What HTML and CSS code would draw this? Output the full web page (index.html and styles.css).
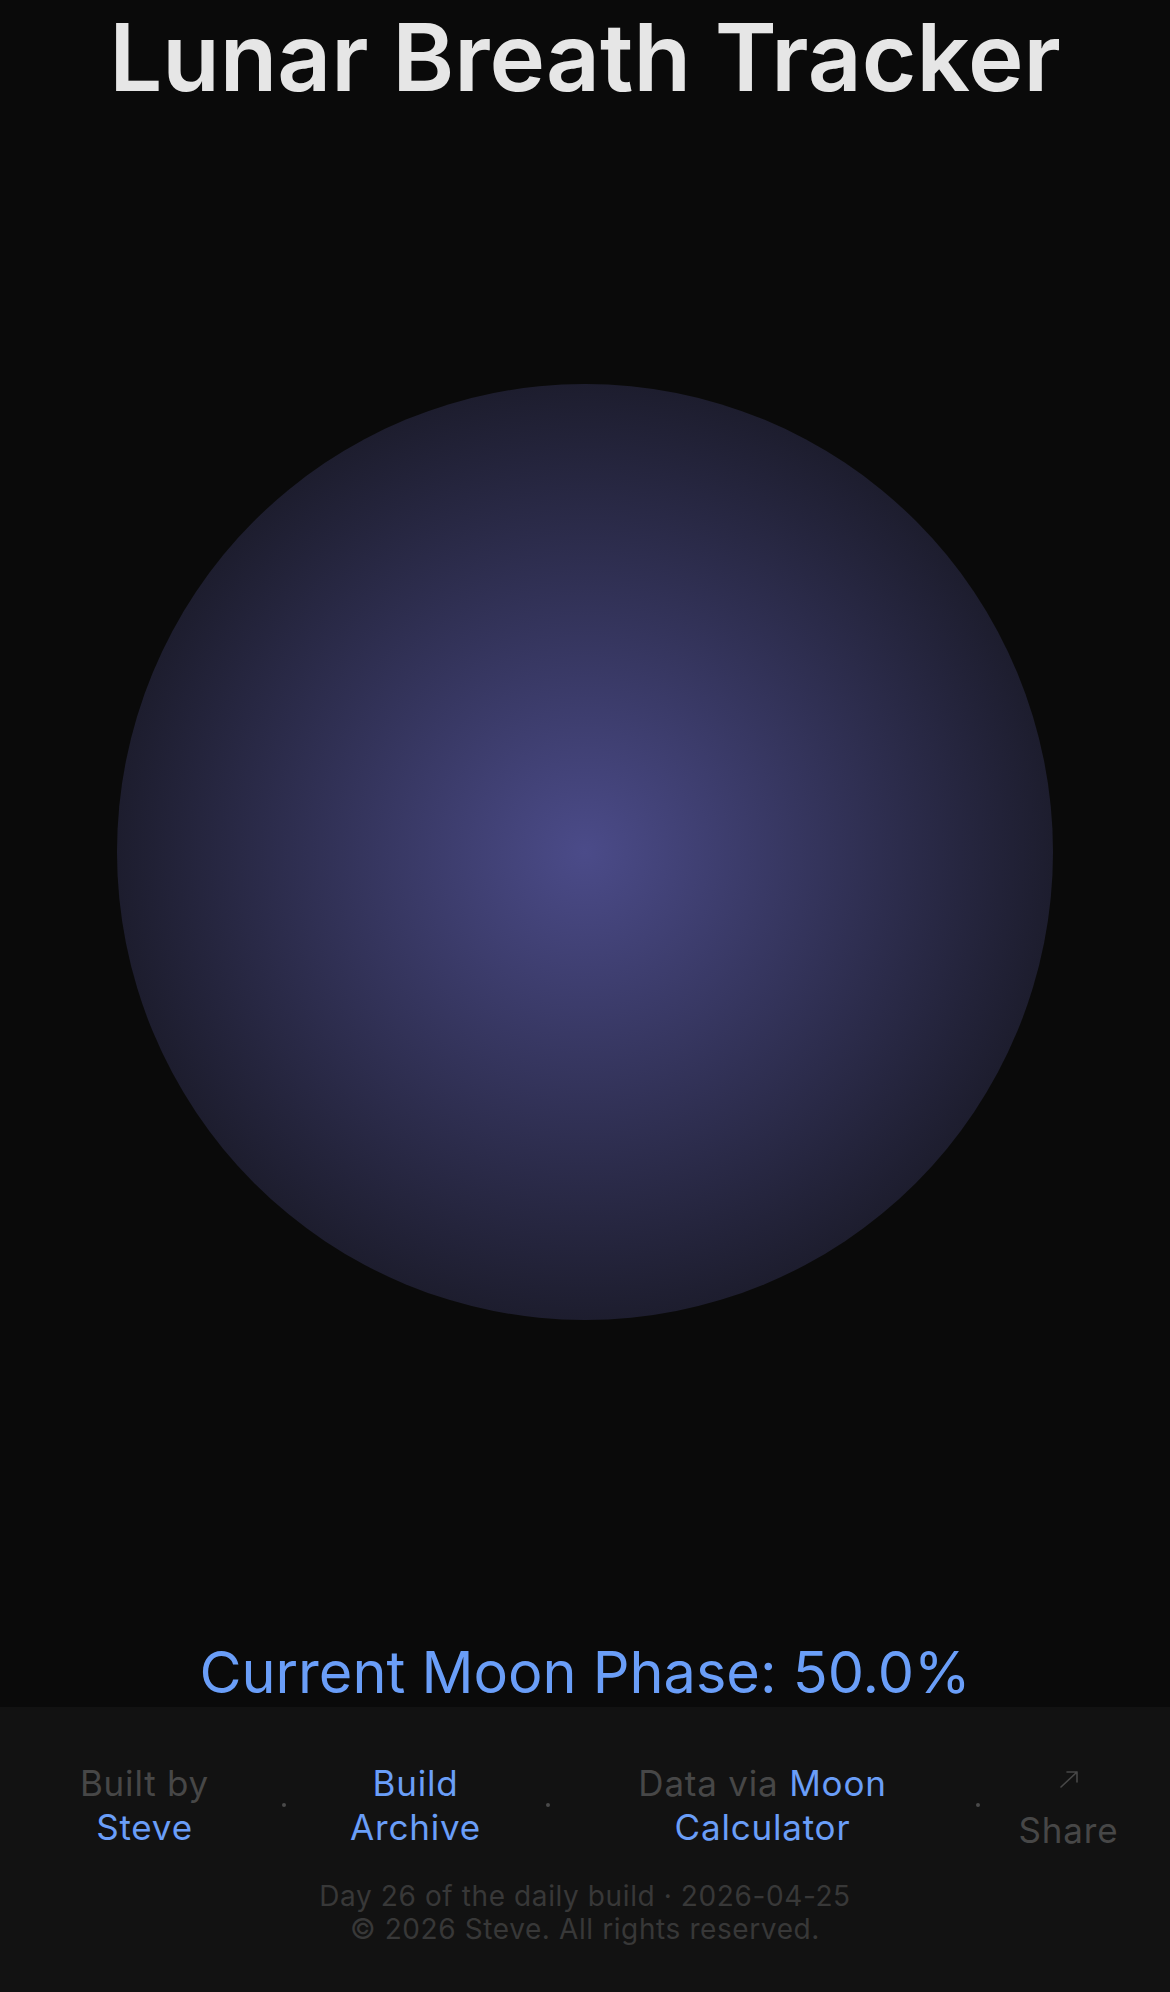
FILE: index.html
```html
<!DOCTYPE html>
<html lang="en">
<head>
<meta charset="utf-8">
<title>Lunar Breath Tracker</title>
<link rel="stylesheet" href="styles.css">
</head>
<body>
<main class="page">
  <h1 class="title">Lunar Breath Tracker</h1>
  <div class="stage"><div class="moon"></div></div>
  <p class="phase">Current Moon Phase: 50.0%</p>
</main>
<footer class="footer">
  <nav class="links">
    <span class="item item-built">Built by <a class="link" href="#">Steve</a></span>
    <span class="sep"></span>
    <span class="item item-archive"><a class="link" href="#">Build Archive</a></span>
    <span class="sep"></span>
    <span class="item item-data">Data via <a class="link" href="#">Moon Calculator</a></span>
    <span class="sep"></span>
    <button class="item item-share" type="button">
      <svg class="share-icon" viewBox="0 0 20 18" width="20" height="18" aria-hidden="true">
        <path d="M2 17 L18 2 M8 2 H18 V12" fill="none" stroke="#474747" stroke-width="1.6" stroke-linecap="round" stroke-linejoin="round"/>
      </svg>
      <span class="share-label">Share</span>
    </button>
  </nav>
  <div class="meta">
    <p class="meta-line">Day 26 of the daily build · 2026-04-25</p>
    <p class="meta-line">© 2026 Steve. All rights reserved.</p>
  </div>
</footer>
</body>
</html>
```
FILE: styles.css
```css
html, body {
  margin: 0;
  padding: 0;
  background: #0a0a0a;
}
body {
  font-family: Inter, "Noto Sans", sans-serif;
}
.title {
  margin: 0;
  font-size: 94px;
  font-weight: 600;
  line-height: 1.23;
  text-align: center;
  color: #e6e6e6;
}
.stage {
  display: flex;
  justify-content: center;
  padding: 268px 0 317px;
}
.moon {
  width: 936px;
  height: 936px;
  border-radius: 50%;
  background: radial-gradient(circle closest-side, #4b4b89 0%, #1d1d2e 100%);
}
.phase {
  margin: 0;
  text-align: center;
  font-size: 57.6px;
  line-height: 70px;
  color: #6a9ef8;
}
.footer {
  background: #121212;
  padding: 51px 0 60px;
}
.links {
  display: flex;
  justify-content: center;
  align-items: center;
  gap: 36px;
  padding-right: 5px;
  font-size: 35px;
  letter-spacing: 0.8px;
  line-height: 44px;
  color: #474747;
  text-align: center;
}
.item {
  flex: 0 0 auto;
}
.item-built { width: 202px; }
.item-archive { width: 188px; }
.item-data { width: 354px; }
.item-share {
  width: 106px;
  display: flex;
  flex-direction: column;
  align-items: center;
  gap: 20px;
  padding: 12px 0 0;
  border: 0;
  background: none;
  font: inherit;
  letter-spacing: inherit;
  color: inherit;
  line-height: 44px;
}
.share-icon {
  display: block;
}
.link {
  color: #6a9ef8;
  text-decoration: none;
}
.sep {
  flex: 0 0 4px;
  height: 4px;
  border-radius: 50%;
  background: #4a4a4a;
}
.meta {
  margin-top: 28px;
  font-size: 28px;
  letter-spacing: 0.6px;
  line-height: 33px;
  color: #383838;
  text-align: center;
}
.meta-line {
  margin: 0;
}
```
